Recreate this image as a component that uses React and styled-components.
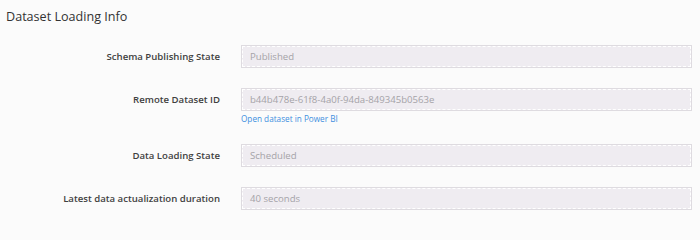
import React from "react";
import styled, { createGlobalStyle } from "styled-components";

const Global = createGlobalStyle`
  html, body { margin: 0; padding: 0; background: #fbfbfb; }
  body { font-family: "Open Sans", "Liberation Sans", sans-serif; }
`;

const Page = styled.div`
  padding: 8px 8px 0 6px;
`;

const Title = styled.h2`
  margin: 0 0 19px 0;
  font-size: 12.6px;
  font-weight: 500;
  color: #333;
  line-height: 18px;
`;

const Form = styled.div`
  display: flex;
  flex-direction: column;
  gap: 20px;
`;

const Row = styled.div`
  display: grid;
  grid-template-columns: 214px 1fr;
  column-gap: 21px;
  align-items: start;
`;

const Label = styled.label`
  text-align: right;
  font-size: 9.6px;
  font-weight: 600;
  color: #3f3f3f;
  line-height: 23px;
`;

const Field = styled.div`
  display: flex;
  flex-direction: column;
`;

const Input = styled.div`
  height: 23px;
  box-sizing: border-box;
  border: 1px solid #dedbe0;
  background: #efecf1;
  padding: 0 8px;
  font-size: 9.6px;
  line-height: 21px;
  color: #a5a3a8;
  outline: 1px dashed #ffffff;
  outline-offset: -2px;
`;

const Link = styled.a`
  font-size: 8.2px;
  color: #3d8fe0;
  text-decoration: none;
  line-height: 13px;
  margin-top: 1px;
  margin-bottom: -1px;
`;

const rows = [
  { label: "Schema Publishing State", value: "Published" },
  {
    label: "Remote Dataset ID",
    value: "b44b478e-61f8-4a0f-94da-849345b0563e",
    link: "Open dataset in Power BI",
  },
  { label: "Data Loading State", value: "Scheduled" },
  { label: "Latest data actualization duration", value: "40 seconds" },
];

export default function App() {
  return (
    <>
      <Global />
      <Page>
        <Title>Dataset Loading Info</Title>
        <Form>
          {rows.map((r) => (
            <Row key={r.label}>
              <Label>{r.label}</Label>
              <Field>
                <Input>{r.value}</Input>
                {r.link && <Link href="#">{r.link}</Link>}
              </Field>
            </Row>
          ))}
        </Form>
      </Page>
    </>
  );
}
